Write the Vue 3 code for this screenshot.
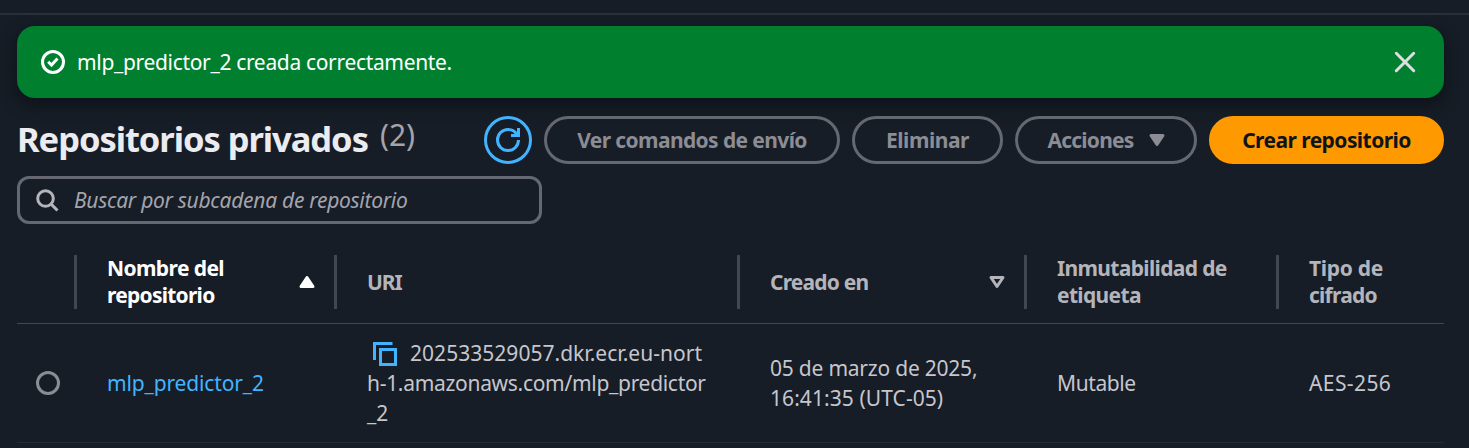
<script setup>
const buttons = [
  { label: 'Ver comandos de envío', cls: 'btn-commands' },
  { label: 'Eliminar', cls: 'btn-delete' },
  { label: 'Acciones', cls: 'btn-actions', caret: true },
]
</script>

<template>
  <div class="page">
    <header class="topbar"></header>

    <div class="flash">
      <svg class="icon" viewBox="0 0 16 16"><circle cx="8" cy="8" r="7" /><path d="M4.8 7.8 7 10l4-4.3" /></svg>
      <span class="flash-text">mlp_predictor_2 creada correctamente.</span>
      <svg class="icon close" viewBox="0 0 16 16"><path d="m2.2 2.2 11.6 11.6M13.8 2.2 2.2 13.8" /></svg>
    </div>

    <div class="heading">
      <h1>Repositorios privados</h1>
      <span class="counter">(2)</span>
      <div class="actions">
        <button class="refresh" aria-label="Actualizar">
          <svg class="icon" viewBox="0 0 16 16"><path d="M10 5h5V0" /><path d="M15 8a6.96 6.96 0 0 1-7 7 6.96 6.96 0 0 1-7-7 6.96 6.96 0 0 1 7-7 6.87 6.87 0 0 1 6.3 4" /></svg>
        </button>
        <button v-for="b in buttons" :key="b.label" class="btn" :class="b.cls">
          <span>{{ b.label }}</span>
          <svg v-if="b.caret" class="icon solid" viewBox="0 0 16 16"><path d="M4 5h8l-4 6z" /></svg>
        </button>
        <button class="btn primary"><span>Crear repositorio</span></button>
      </div>
    </div>

    <div class="search">
      <svg class="icon" viewBox="0 0 16 16"><circle cx="7" cy="7" r="5.2" /><path d="m15 15-4.4-4.4" /></svg>
      <span class="placeholder">Buscar por subcadena de repositorio</span>
    </div>

    <div class="row head">
      <div class="cell"></div>
      <div class="cell sorted">
        <span><span class="t-nombre">Nombre del</span><br><span class="t-repo">repositorio</span></span>
        <svg class="icon solid" viewBox="0 0 16 16"><path d="M4 11h8l-4-6z" /></svg>
      </div>
      <div class="cell"><span class="t-uri">URI</span></div>
      <div class="cell">
        <span class="t-creado">Creado en</span>
        <svg class="icon round" viewBox="0 0 16 16"><path d="M4 5h8l-4 6z" /></svg>
      </div>
      <div class="cell"><span class="t-inmut">Inmutabilidad de<br>etiqueta</span></div>
      <div class="cell"><span><span class="t-tipo">Tipo de</span><br><span class="t-cifrado">cifrado</span></span></div>
    </div>

    <div class="row body">
      <div class="cell pick"><span class="radio"></span></div>
      <div class="cell"><a class="link">mlp_predictor_2</a></div>
      <div class="cell">
        <div class="uri">
          <div class="uri-first">
            <svg class="icon copy" viewBox="0 0 16 16"><path d="M5 5h10v10H5z" /><path d="M1 12V1h12" /></svg>
            <span class="u1">202533529057.dkr.ecr.eu-nort</span>
          </div>
          <div class="u2">h-1.amazonaws.com/mlp_predictor</div>
          <div>_2</div>
        </div>
      </div>
      <div class="cell"><span><span class="d1">05 de marzo de 2025,</span><br><span class="d2">16:41:35 (UTC-05)</span></span></div>
      <div class="cell"><span class="mutable">Mutable</span></div>
      <div class="cell"><span class="aes">AES-256</span></div>
    </div>
  </div>
</template>

<style>
body { background: #161d26; }
</style>

<style scoped>
.page {
  box-sizing: border-box;
  height: 448px;
  overflow: hidden;
  padding: 0 25px 0 17px;
  background: #161d26;
  color: #c6c6cd;
  font: 21px/30px "Noto Sans", "Open Sans", sans-serif;
  white-space: nowrap;
}
.topbar {
  height: 13px;
  margin: 0 -25px 11px -17px;
  border-bottom: 2px solid #2a303b;
}
.icon {
  display: block;
  flex: none;
  width: 24px;
  height: 24px;
  fill: none;
  stroke: currentColor;
  stroke-width: 2;
  overflow: visible;
}
.icon.solid { fill: currentColor; stroke-linejoin: round; }
.icon.round { stroke-linejoin: round; }

.flash {
  box-sizing: border-box;
  display: flex;
  align-items: center;
  height: 72px;
  padding: 0 27px 0 24px;
  border-radius: 18px;
  background: #00802f;
  color: #fff;
  box-shadow: 0 6px 14px 2px #0f141a;
}
.flash-text { margin-left: 12px; letter-spacing: -0.33px; }
.close { margin-left: auto; color: #dedee3; stroke-linecap: round; }

.heading { display: flex; height: 48px; margin-top: 18px; }
h1 {
  margin: 0;
  font-size: 34.5px;
  line-height: 46px;
  font-weight: 700;
  letter-spacing: -1.05px;
  color: #ebebf0;
}
.counter { margin-left: 12px; font-size: 30px; line-height: 37px; color: #a4a4ad; }
.actions { display: flex; gap: 12px; margin-left: auto; }
button {
  box-sizing: border-box;
  display: flex;
  align-items: center;
  justify-content: center;
  height: 48px;
  padding: 0;
  border: 3px solid #656871;
  border-radius: 30px;
  background: none;
  color: #8c8c94;
  font: 700 21px/30px "Noto Sans", "Open Sans", sans-serif;
}
.refresh { width: 48px; border-color: #42b4ff; color: #42b4ff; }
.btn-commands { width: 296px; letter-spacing: -0.61px; }
.btn-delete { width: 151px; letter-spacing: -0.45px; }
.btn-actions { width: 182px; padding-left: 5px; gap: 12px; letter-spacing: -0.8px; }
.primary { width: 235px; border-color: #f90; background: #f90; color: #0f141a; letter-spacing: -0.56px; }

.search {
  box-sizing: border-box;
  display: flex;
  align-items: center;
  width: 525px;
  height: 48px;
  margin-top: 12px;
  padding-left: 15px;
  border: 3px solid #656871;
  border-radius: 12px;
  color: #b4b4bb;
}
.placeholder { margin-left: 15px; font-style: italic; letter-spacing: -0.28px; color: #a4a4ad; }

.row { display: grid; grid-template-columns: 60px 260px 403px 287px 252px 165px; }
.cell { display: flex; align-items: center; padding-left: 30px; }
.head {
  height: 82px;
  margin-top: 17px;
  align-items: center;
  border-bottom: 1px solid #424650;
  color: #b4b4bb;
  font-weight: 700;
  line-height: 27px;
}
.head .cell {
  box-sizing: border-box;
  height: 54px;
  padding-right: 15px;
  justify-content: space-between;
  border-right: 3px solid #424650;
}
.head .cell:last-child { border-right: 0; }
.head .sorted { color: #fff; }
.t-nombre { letter-spacing: -0.6px; }
.t-repo { letter-spacing: -0.75px; }
.t-uri { letter-spacing: -1.1px; }
.t-creado { letter-spacing: -0.8px; }
.t-inmut { letter-spacing: -0.65px; }
.t-tipo { letter-spacing: -0.3px; }
.t-cifrado { letter-spacing: -0.75px; }

.body { height: 118px; border-bottom: 1px solid #232b37; }
.body .pick { padding-left: 19px; }
.radio {
  box-sizing: border-box;
  width: 24px;
  height: 24px;
  border: 3px solid #8c8c94;
  border-radius: 50%;
}
.link { color: #42b4ff; letter-spacing: -0.15px; }
.uri-first { display: flex; align-items: flex-end; height: 30px; padding-left: 6px; }
.copy { margin-bottom: 2px; color: #42b4ff; }
.u1 { margin-left: 13px; letter-spacing: 0.03px; }
.u2 { letter-spacing: -0.3px; }
.d1 { letter-spacing: -0.22px; }
.d2 { letter-spacing: 0.07px; }
.mutable { letter-spacing: -0.4px; }
.aes { letter-spacing: 0.4px; }
</style>
